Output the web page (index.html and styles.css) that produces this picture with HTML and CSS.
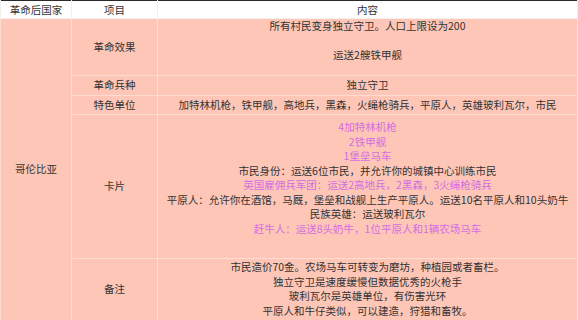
FILE: index.html
```html
<!DOCTYPE html>
<html lang="zh">
<head>
<meta charset="utf-8">
<link rel="stylesheet" href="styles.css">
</head>
<body>
<table class="civ">
  <colgroup>
    <col class="c1"><col class="c2"><col class="c3">
  </colgroup>
  <thead>
    <tr class="h">
      <th>革命后国家</th><th>项目</th><th>内容</th>
    </tr>
  </thead>
  <tbody>
    <tr class="r1">
      <td rowspan="5" class="nation">哥伦比亚</td>
      <td>革命效果</td>
      <td class="top">
        <div>所有村民变身独立守卫。人口上限设为200</div>
        <div class="gap">运送2艘铁甲舰</div>
      </td>
    </tr>
    <tr class="r2">
      <td>革命兵种</td>
      <td>独立守卫</td>
    </tr>
    <tr class="r3">
      <td>特色单位</td>
      <td>加特林机枪，铁甲舰，高地兵，黑森，火绳枪骑兵，平原人，英雄玻利瓦尔，市民</td>
    </tr>
    <tr class="r4">
      <td>卡片</td>
      <td class="top cards">
        <div class="pink">4加特林机枪</div>
        <div class="pink">2铁甲舰</div>
        <div class="pink">1堡垒马车</div>
        <div>市民身份：运送6位市民，并允许你的城镇中心训练市民</div>
        <div class="pink">英国雇佣兵军团：运送2高地兵，2黑森，3火绳枪骑兵</div>
        <div>平原人：允许你在酒馆，马厩，堡垒和战舰上生产平原人。运送10名平原人和10头奶牛</div>
        <div>民族英雄：运送玻利瓦尔</div>
        <div class="pink">赶牛人：运送8头奶牛，1位平原人和1辆农场马车</div>
      </td>
    </tr>
    <tr class="r5">
      <td>备注</td>
      <td class="top notes">
        <div>市民造价70金。农场马车可转变为磨坊，种植园或者畜栏。</div>
        <div>独立守卫是速度缓慢但数据优秀的火枪手</div>
        <div>玻利瓦尔是英雄单位，有伤害光环</div>
        <div>平原人和牛仔类似，可以建造，狩猎和畜牧。</div>
      </td>
    </tr>
  </tbody>
</table>
</body>
</html>
```

FILE: styles.css
```css
html, body {
  margin: 0;
  padding: 0;
  background: #ffffff;
}
body {
  font-family: "Noto Sans CJK SC", "Noto Sans", sans-serif;
  font-size: 10.5px;
  color: #333333;
}
.civ {
  width: 577px;
  border-collapse: collapse;
  table-layout: fixed;
  border-top: 1px solid #2a2a2a;
}
.c1 { width: 71px; }
.c2 { width: 86px; }
.c3 { width: 420px; }
.civ th {
  background: #ffffff;
  font-weight: normal;
  height: 17px;
  padding: 0;
  line-height: 14px;
  text-align: center;
  vertical-align: middle;
  border: 1px solid #f4f0ee;
  border-top: none;
}
.civ td {
  background: #fec6b6;
  border: 1px solid #fddcd2;
  padding: 0;
  text-align: center;
  vertical-align: middle;
  line-height: 14.5px;
}
.civ td.top {
  vertical-align: top;
}
.r1 td { height: 56px; }
.r2 td { height: 19px; }
.r3 td { height: 18px; }
.r4 td { height: 138px; }
.r5 td { height: 60px; }
.gap { margin-top: 14.5px; }
.cards { padding-top: 5px !important; }
.notes { padding-top: 1px !important; line-height: 14.5px !important; }
.pink { color: #d26ee2; }
```
